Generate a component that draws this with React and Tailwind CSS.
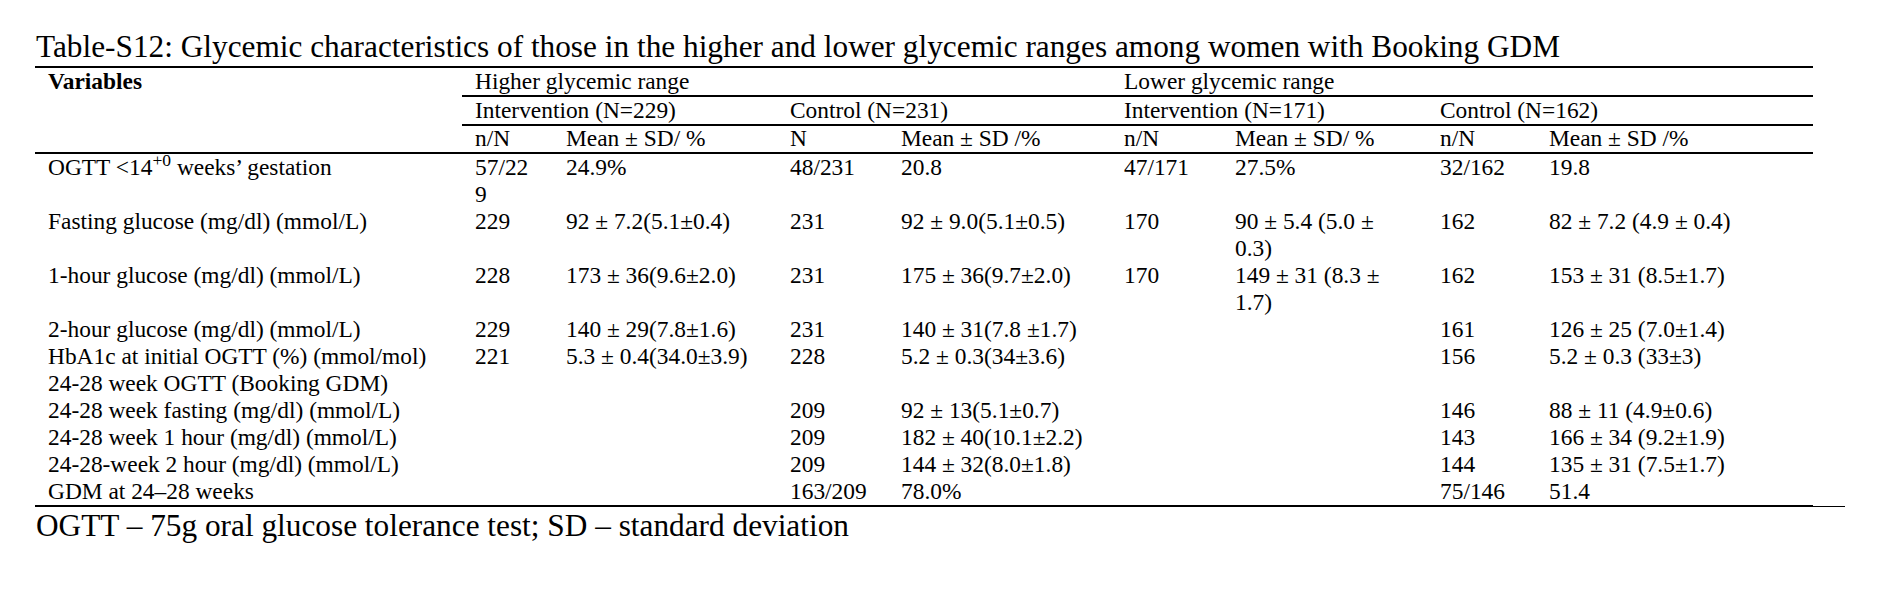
import React from "react";

const rows = [
  [
    <>
      OGTT &lt;14<sup>+0</sup> weeks’ gestation
    </>,
    <>
      57/22
      <br />9
    </>,
    "24.9%",
    "48/231",
    "20.8",
    "47/171",
    "27.5%",
    "32/162",
    "19.8",
  ],
  [
    "Fasting glucose (mg/dl) (mmol/L)",
    "229",
    "92 ± 7.2(5.1±0.4)",
    "231",
    "92 ± 9.0(5.1±0.5)",
    "170",
    <>
      90 ± 5.4 (5.0 ±
      <br />
      0.3)
    </>,
    "162",
    "82 ± 7.2 (4.9 ± 0.4)",
  ],
  [
    "1-hour glucose (mg/dl) (mmol/L)",
    "228",
    "173 ± 36(9.6±2.0)",
    "231",
    "175 ± 36(9.7±2.0)",
    "170",
    <>
      149 ± 31 (8.3 ±
      <br />
      1.7)
    </>,
    "162",
    "153 ± 31 (8.5±1.7)",
  ],
  ["2-hour glucose (mg/dl) (mmol/L)", "229", "140 ± 29(7.8±1.6)", "231", "140 ± 31(7.8 ±1.7)", "", "", "161", "126 ± 25 (7.0±1.4)"],
  ["HbA1c at initial OGTT (%) (mmol/mol)", "221", "5.3 ± 0.4(34.0±3.9)", "228", "5.2 ± 0.3(34±3.6)", "", "", "156", "5.2 ± 0.3 (33±3)"],
  ["24-28 week OGTT (Booking GDM)", "", "", "", "", "", "", "", ""],
  ["24-28 week fasting (mg/dl) (mmol/L)", "", "", "209", "92 ± 13(5.1±0.7)", "", "", "146", "88 ± 11 (4.9±0.6)"],
  ["24-28 week 1 hour (mg/dl) (mmol/L)", "", "", "209", "182 ± 40(10.1±2.2)", "", "", "143", "166 ± 34 (9.2±1.9)"],
  ["24-28-week 2 hour (mg/dl) (mmol/L)", "", "", "209", "144 ± 32(8.0±1.8)", "", "", "144", "135 ± 31 (7.5±1.7)"],
  ["GDM at 24–28 weeks", "", "", "163/209", "78.0%", "", "", "75/146", "51.4"],
];

export default function App() {
  return (
    <div className="min-h-[595px] w-[1896px] bg-white pl-[35px] pt-[30px] text-black font-['Liberation_Serif','Times_New_Roman',serif]">
      <div className="pl-[1px] text-[31.3px] leading-[34px] whitespace-nowrap">
        Table-S12: Glycemic characteristics of those in the higher and lower glycemic ranges among women with Booking GDM
      </div>
      <div className="mt-[2px] w-[1778px]">
        <div className="h-[2px] bg-black" />
        <div className="grid grid-cols-[427px_91px_224px_111px_223px_111px_205px_109px_277px] text-[23.4px] leading-[27px] whitespace-nowrap">
          <div className="row-span-3 pl-[13px] font-bold">Variables</div>
          <div className="col-span-4 h-[29px] border-b-2 border-black pl-[13px]">Higher glycemic range</div>
          <div className="col-span-4 h-[29px] border-b-2 border-black pl-[13px]">Lower glycemic range</div>

          <div className="col-span-2 h-[29px] border-b-2 border-black pl-[13px]">Intervention (N=229)</div>
          <div className="col-span-2 h-[29px] border-b-2 border-black pl-[13px]">Control (N=231)</div>
          <div className="col-span-2 h-[29px] border-b-2 border-black pl-[13px]">Intervention (N=171)</div>
          <div className="col-span-2 h-[29px] border-b-2 border-black pl-[13px]">Control (N=162)</div>

          <div className="h-[26px] pl-[13px] leading-[25px]">n/N</div>
          <div className="h-[26px] pl-[13px] leading-[25px]">Mean ± SD/ %</div>
          <div className="h-[26px] pl-[13px] leading-[25px]">N</div>
          <div className="h-[26px] pl-[13px] leading-[25px]">Mean ± SD /%</div>
          <div className="h-[26px] pl-[13px] leading-[25px]">n/N</div>
          <div className="h-[26px] pl-[13px] leading-[25px]">Mean ± SD/ %</div>
          <div className="h-[26px] pl-[13px] leading-[25px]">n/N</div>
          <div className="h-[26px] pl-[13px] leading-[25px]">Mean ± SD /%</div>

          <div className="col-span-9 h-[2px] bg-black" />

          {rows.map((r, i) =>
            r.map((c, j) => (
              <div key={i + "-" + j} className="pl-[13px]">
                {c}
              </div>
            ))
          )}
        </div>
        <div className="flex items-end">
          <div className="h-[2px] w-[1778px] shrink-0 bg-black" />
          <div className="h-[1px] w-[32px] shrink-0 bg-black" />
        </div>
      </div>
      <div className="mt-[2px] pl-[1px] text-[31.3px] leading-[34px] whitespace-nowrap">
        OGTT – 75g oral glucose tolerance test; SD – standard deviation
      </div>
    </div>
  );
}
